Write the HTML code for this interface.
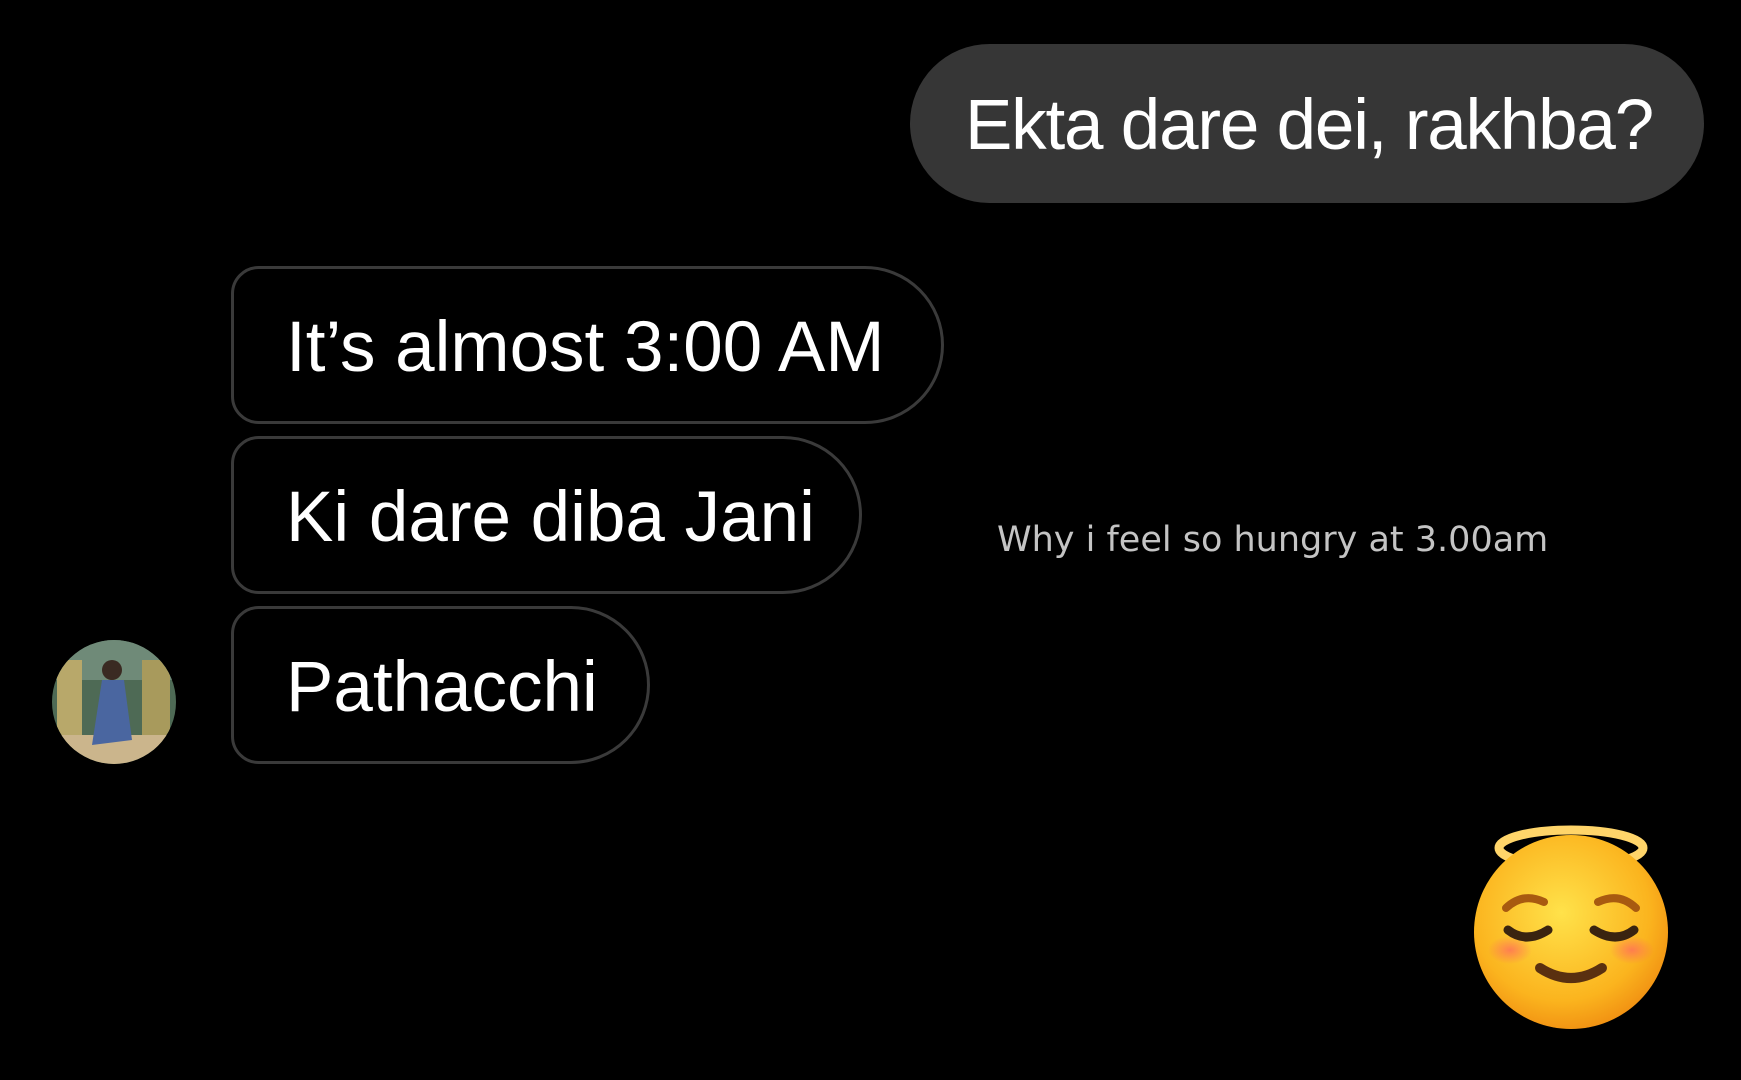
<!DOCTYPE html>
<html><head><meta charset="utf-8"><style>
html,body{margin:0;padding:0;background:#000;width:1741px;height:1080px;overflow:hidden;position:relative;font-family:"Liberation Sans",sans-serif}
.b{position:absolute;box-sizing:border-box;color:#fff;font-size:71px;line-height:1;white-space:nowrap}
.o{border:3px solid #3a3a3a;border-radius:28px 80px 80px 28px;background:#000}
</style></head><body>
<div class="b" style="left:910px;top:44px;width:794px;height:159px;background:#363636;border-radius:80px;padding:46px 0 0 55px;letter-spacing:-1.2px">Ekta dare dei, rakhba?</div>
<div class="b o" style="left:231px;top:266px;width:713px;height:158px;padding:43px 0 0 52px">It’s almost 3:00 AM</div>
<div class="b o" style="left:231px;top:436px;width:631px;height:158px;padding:43px 0 0 52px">Ki dare diba Jani</div>
<div class="b o" style="left:231px;top:606px;width:419px;height:158px;padding:43px 0 0 52px">Pathacchi</div>
<svg style="position:absolute;left:52px;top:640px" width="124" height="124" viewBox="0 0 124 124">
<defs><clipPath id="c"><circle cx="62" cy="62" r="62"/></clipPath></defs>
<g clip-path="url(#c)">
<rect width="124" height="124" fill="#4e6a55"/>
<rect x="0" y="0" width="124" height="40" fill="#6f8a78"/>
<rect x="5" y="20" width="25" height="90" fill="#b8a86a"/>
<rect x="90" y="20" width="28" height="90" fill="#a89a5c"/>
<rect x="0" y="95" width="124" height="29" fill="#cbb58c"/>
<path d="M50 40 L72 40 L80 100 L40 105 Z" fill="#4a66a0"/>
<circle cx="60" cy="30" r="10" fill="#3a2a22"/>
</g></svg>
<div style="position:absolute;left:997px;top:520px;color:#c4c4c4;font-family:'DejaVu Sans','Liberation Sans',sans-serif;font-size:35px;letter-spacing:0px;white-space:nowrap">Why i feel so hungry at 3.00am</div>
<svg style="position:absolute;left:1468px;top:820px" width="206" height="210" viewBox="0 0 206 210">
<defs><radialGradient id="g" cx="0.45" cy="0.4" r="0.65"><stop offset="0" stop-color="#ffe24a"/><stop offset="0.7" stop-color="#fbb41e"/><stop offset="1" stop-color="#ef8a10"/></radialGradient>
<radialGradient id="bl" cx="0.5" cy="0.5" r="0.5"><stop offset="0" stop-color="#ff6f5a" stop-opacity="0.8"/><stop offset="1" stop-color="#ff6f5a" stop-opacity="0"/></radialGradient></defs>
<ellipse cx="103" cy="28" rx="72" ry="18" fill="none" stroke="#ffd56a" stroke-width="9"/>
<circle cx="103" cy="112" r="97" fill="url(#g)"/>
<ellipse cx="42" cy="130" rx="22" ry="14" fill="url(#bl)"/>
<ellipse cx="164" cy="130" rx="22" ry="14" fill="url(#bl)"/>
<path d="M38 88 Q55 72 76 82" stroke="#a85a10" stroke-width="8" fill="none" stroke-linecap="round"/>
<path d="M130 82 Q151 72 168 88" stroke="#a85a10" stroke-width="8" fill="none" stroke-linecap="round"/>
<path d="M40 110 Q58 124 80 110" stroke="#3a2410" stroke-width="9" fill="none" stroke-linecap="round"/>
<path d="M126 110 Q148 124 166 110" stroke="#3a2410" stroke-width="9" fill="none" stroke-linecap="round"/>
<path d="M72 148 Q103 168 134 148" stroke="#5a3010" stroke-width="10" fill="none" stroke-linecap="round"/>
</svg>
</body></html>
